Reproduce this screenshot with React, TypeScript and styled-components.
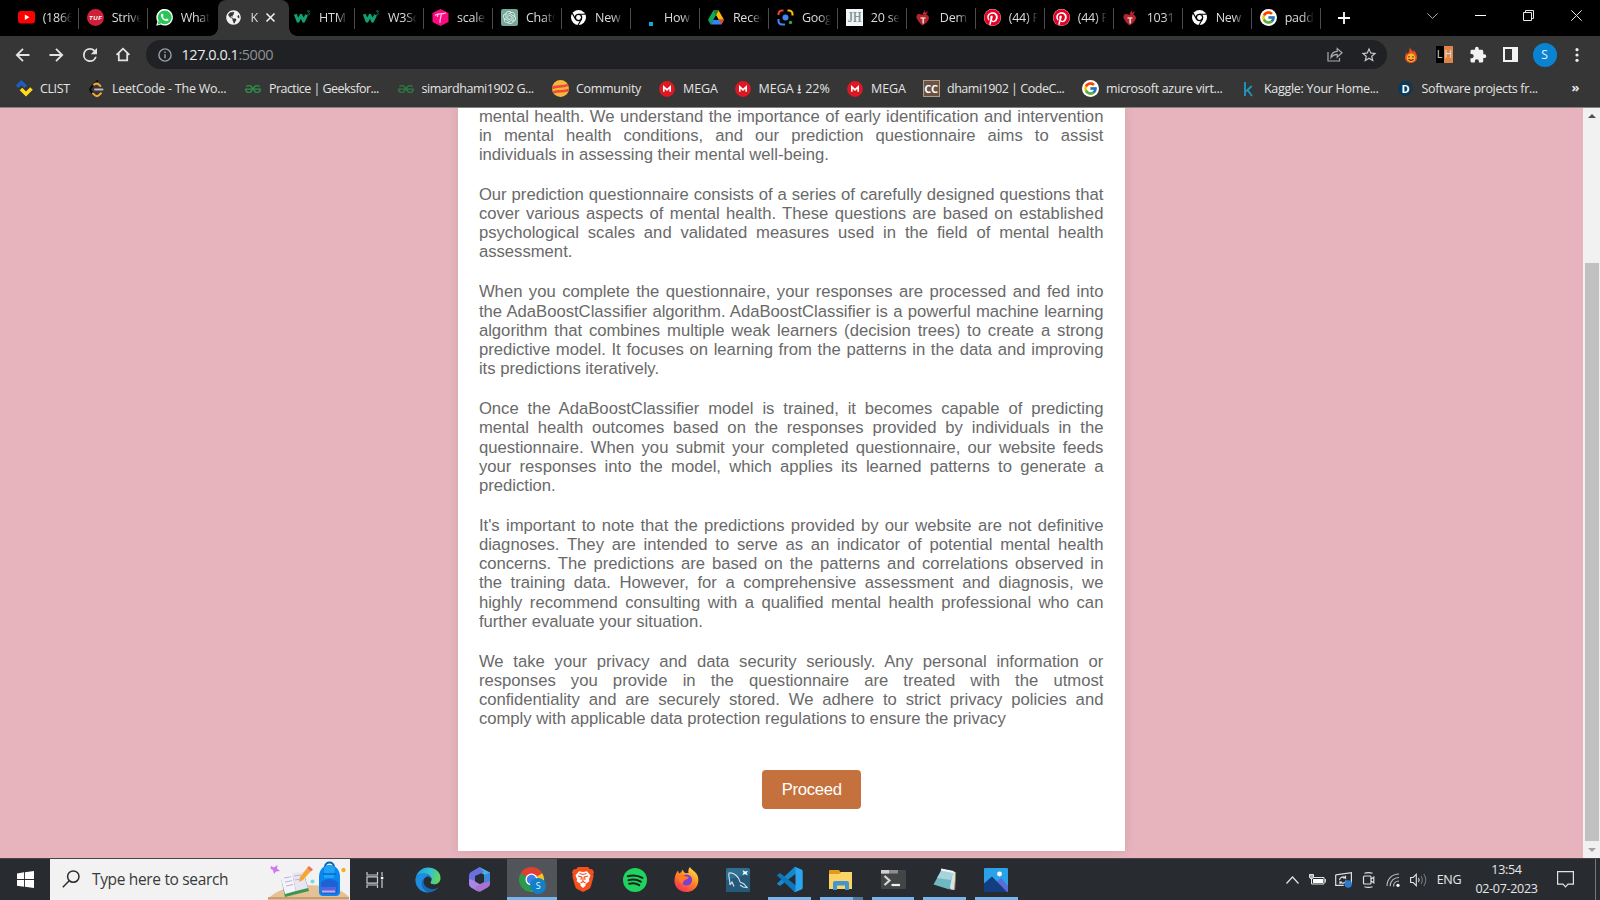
import React from "react";
import styled, { createGlobalStyle, css } from "styled-components";
import { FaPinterest, FaGlobeAmericas } from "react-icons/fa";
import { FcGoogle } from "react-icons/fc";
import { SiOpenai, SiGeeksforgeeks } from "react-icons/si";
import { MdExtension, MdStarBorder } from "react-icons/md";

const Global = createGlobalStyle`
  * { box-sizing: border-box; }
  html, body { margin: 0; padding: 0; width: 1600px; height: 900px; overflow: hidden; }
  svg { display: block; flex: none; overflow: visible; }
`;

const uiFont = css`
  font-family: "Open Sans", "Noto Sans", sans-serif;
`;

const Screen = styled.div`
  width: 1600px;
  height: 900px;
  display: flex;
  flex-direction: column;
  overflow: hidden;
  ${uiFont}
`;

/* ---------- tab strip ---------- */

const TabStrip = styled.div`
  flex: none;
  height: 36px;
  background: #000;
  display: flex;
  padding-left: 10px;
  color: #dcdcdc;
`;

const Tab = styled.div<{ $active?: boolean; $line?: boolean }>`
  position: relative;
  width: 68.98px;
  flex: none;
  height: 36px;
  display: flex;
  align-items: center;
  padding: 0 0 1px 7.7px;
  background: ${(p) => (p.$active ? "#363636" : "transparent")};
  border-radius: 8px 8px 0 0;
  ${(p) =>
    p.$line &&
    css`
      &::after {
        content: "";
        position: absolute;
        right: 0;
        top: 8px;
        width: 1px;
        height: 21px;
        background: #4b4b4b;
      }
    `}
  ${(p) =>
    p.$active &&
    css`
      width: 71px;
      margin-left: 0.9px;
      margin-right: -2.4px;
      &::before, &::after {
        content: "";
        position: absolute;
        bottom: 0;
        width: 8px;
        height: 8px;
      }
      &::before { left: -8px; background: radial-gradient(circle at 0 0, transparent 7.5px, #363636 8px); }
      &::after { right: -8px; background: radial-gradient(circle at 100% 0, transparent 7.5px, #363636 8px); }
    `}
`;

const Favicon = styled.span`
  width: 17px;
  height: 17px;
  flex: none;
  display: flex;
  align-items: center;
  justify-content: center;
`;

const TabTitle = styled.span<{ $w?: number }>`
  margin-left: 8px;
  width: ${(p) => p.$w ?? 29}px;
  overflow: hidden;
  white-space: nowrap;
  font-size: 12.5px;
  line-height: 18px;
  letter-spacing: -0.25px;
  mask-image: linear-gradient(90deg, #000 60%, transparent 100%);
`;

const NewTab = styled.div`
  width: 46px;
  display: flex;
  align-items: center;
  justify-content: center;
`;

const WindowControls = styled.div`
  margin-left: auto;
  display: flex;
  align-items: center;
  padding-bottom: 5px;
  gap: 37px;
  margin-right: 18px;
`;

/* ---------- address row ---------- */

const AddressRow = styled.div`
  flex: none;
  height: 37px;
  background: #363636;
  display: flex;
  align-items: center;
  padding-left: 16px;
`;

const NavButtons = styled.div`
  width: 130px;
  display: flex;
  align-items: center;
  gap: 19.3px;
`;

const Omnibox = styled.div`
  width: 1241px;
  height: 29px;
  border-radius: 15px;
  background: #202124;
  display: flex;
  align-items: center;
  padding: 0 9.5px 0 11.5px;
`;

const Url = styled.span`
  margin-left: 10px;
  font-size: 14.5px;
  line-height: 20px;
  letter-spacing: -0.47px;
  color: #e8eaed;
  flex: 1;
`;

const Port = styled.span`
  color: #8e9195;
`;

const OmniActions = styled.div`
  display: flex;
  align-items: center;
  gap: 17px;
`;

const Extensions = styled.div`
  flex: 1;
  display: flex;
  align-items: center;
  padding-left: 16px;
`;

const ExtSlot = styled.span<{ $w: number }>`
  width: ${(p) => p.$w}px;
  flex: none;
  display: flex;
  justify-content: center;
`;

const LhBadge = styled.span`
  width: 17px;
  height: 17px;
  flex: none;
  display: grid;
  grid-template-columns: 1fr 1fr;
  text-align: center;
  font: 10px/17px "Liberation Sans", sans-serif;
  color: #ddd;
  background: linear-gradient(90deg, #000 50%, #dd8449 50%);
`;

const Avatar = styled.span<{ $size: number; $font: number; $bg: string }>`
  width: ${(p) => p.$size}px;
  height: ${(p) => p.$size}px;
  flex: none;
  border-radius: 50%;
  background: ${(p) => p.$bg};
  color: #e9f4fb;
  font-size: ${(p) => p.$font}px;
  line-height: ${(p) => p.$size}px;
  text-align: center;
`;

/* ---------- bookmarks ---------- */

const BookmarkBar = styled.div`
  flex: none;
  height: 35px;
  background: #363636;
  border-bottom: 1px solid #828282;
  display: flex;
  align-items: center;
  padding: 0 0 3px 15.5px;
`;

const Bookmark = styled.div<{ $w: number }>`
  width: ${(p) => p.$w}px;
  flex: none;
  display: flex;
  align-items: center;
  gap: 7.5px;
  white-space: nowrap;
  color: #e4e4e4;
`;

const BookmarkLabel = styled.span<{ $ls?: number }>`
  font-size: 12.5px;
  line-height: 18px;
  letter-spacing: ${(p) => p.$ls ?? -0.3}px;
`;

const MoreMark = styled.span`
  font-size: 13px;
  line-height: 16px;
  font-weight: 700;
  color: #e4e4e4;
  padding: 0 0 3px 2px;
`;

const LetterBadge = styled.span<{ $bg: string; $fg: string; $round?: boolean; $size: number; $font: number; $border?: string }>`
  width: ${(p) => p.$size}px;
  height: ${(p) => p.$size}px;
  border-radius: ${(p) => (p.$round ? "50%" : "0")};
  background: ${(p) => p.$bg};
  border: ${(p) => (p.$border ? `1px solid ${p.$border}` : "none")};
  color: ${(p) => p.$fg};
  font-size: ${(p) => p.$font}px;
  font-weight: 700;
  letter-spacing: -0.3px;
  display: flex;
  align-items: center;
  justify-content: center;
  line-height: 1;
`;

/* ---------- page ---------- */

const Viewport = styled.div`
  flex: 1;
  min-height: 0;
  display: flex;
  overflow: hidden;
  background: #e7b4bd;
`;

const PageArea = styled.main`
  flex: 1;
  padding-left: 458px;
  padding-bottom: 7px;
  display: flex;
`;

const Card = styled.article`
  width: 667px;
  background: #fff;
  box-shadow: 0 0 10px rgba(0, 0, 0, 0.1);
  padding: 0 21.6px 0 20.9px;
  color: #696969;
  font-family: "Liberation Sans", Arial, sans-serif;
  font-size: 16.667px;
  line-height: 19.17px;
`;

const Copy = styled.p`
  margin: 0 0 20.83px;
  text-align: justify;
  &:first-child { margin-top: -1.4px; }
`;

const ButtonRow = styled.div`
  display: flex;
  justify-content: center;
  padding: 20.6px 0 0 41px;
`;

const ProceedButton = styled.button`
  width: 99px;
  height: 39px;
  padding: 1.5px 0 0 0;
  border: 0;
  border-radius: 4px;
  background: #c4713d;
  color: #fff;
  font: 16.667px "Liberation Sans", Arial, sans-serif;
  letter-spacing: -0.3px;
`;

const ScrollTrack = styled.div`
  width: 17px;
  background: #f1f1f1;
  display: flex;
  flex-direction: column;
  align-items: center;
`;

const ScrollArrow = styled.div`
  height: 17px;
  display: flex;
  align-items: center;
`;

const ScrollThumb = styled.div`
  width: 14px;
  height: 579px;
  margin-top: 138px;
  background: #c1c1c1;
`;

/* ---------- taskbar ---------- */

const Taskbar = styled.footer`
  flex: none;
  height: 42px;
  background: #282c31;
  border-top: 1px solid #4a4448;
  display: flex;
`;

const StartCell = styled.div`
  width: 50px;
  display: flex;
  align-items: center;
  justify-content: center;
`;

const SearchBox = styled.div`
  width: 300px;
  height: 40.5px;
  background: #f2f2f2;
  display: flex;
  align-items: center;
  padding-left: 12px;
`;

const SearchText = styled.span`
  margin-left: 12px;
  width: 177px;
  font-size: 15.5px;
  line-height: 22px;
  letter-spacing: -0.34px;
  color: #3a3a3a;
  white-space: nowrap;
`;

const TaskViewCell = styled.div`
  width: 52.5px;
  padding-right: 2px;
  display: flex;
  align-items: center;
  justify-content: center;
`;

const AppCell = styled.div<{ $active?: boolean; $open?: boolean; $stack?: boolean }>`
  width: 51.65px;
  position: relative;
  display: flex;
  align-items: center;
  justify-content: center;
  ${(p) => p.$active && css`background: linear-gradient(90deg, transparent 1px, #515458 1px);`}
  &::after {
    content: "";
    display: ${(p) => (p.$open || p.$active ? "block" : "none")};
    position: absolute;
    left: ${(p) => (p.$active ? 1 : 4.5)}px;
    right: ${(p) => (p.$active ? 0 : 4.5)}px;
    bottom: 0;
    height: 3px;
    background: ${(p) => (p.$stack ? "linear-gradient(90deg, #78b5ea 33px, #4f7ba1 33px)" : "#78b5ea")};
  }
`;

const AppMark = styled.span`
  position: relative;
  display: flex;
`;

const MarkBadge = styled.span`
  position: absolute;
  right: -2px;
  bottom: -2px;
  display: flex;
`;

const Tray = styled.div`
  margin-left: auto;
  display: flex;
  align-items: center;
  color: #e8e8e8;
`;

const TraySlot = styled.span<{ $w: number }>`
  width: ${(p) => p.$w}px;
  display: flex;
  justify-content: center;
`;

const Language = styled.span`
  width: 32px;
  font-size: 12.5px;
  letter-spacing: -0.3px;
  text-align: center;
`;

const Clock = styled.div`
  width: 83px;
  text-align: center;
  font-size: 12.5px;
  line-height: 19px;
  letter-spacing: -0.3px;
  padding-bottom: 1px;
`;

const ShowDesktop = styled.div`
  width: 5px;
  height: 41px;
  border-left: 1px solid #777;
`;

/* ---------- drawings ---------- */

const YouTube = () => (
  <svg width="17" height="13" viewBox="0 0 17 13"><rect width="17" height="12.5" rx="3" fill="#f00" /><path d="M6.8 3.6v5.4l4.6-2.7z" fill="#fff" /></svg>
);
const StriverLogo = () => (
  <svg width="17" height="17" viewBox="0 0 17 17">
    <circle cx="8.5" cy="8.5" r="8.5" fill="#d11f3a" />
    <text x="8.5" y="10.8" textAnchor="middle" fontFamily="Liberation Sans, sans-serif" fontSize="6" fontWeight="700" fontStyle="italic" fill="#fff" textLength="13">TUF</text>
  </svg>
);
const WhatsApp = () => (
  <svg width="17" height="17" viewBox="0 0 17 17">
    <path d="M.2 16.8 1.4 12.4A8.3 8.3 0 1 1 4.7 15.6z" fill="#fff" />
    <circle cx="8.7" cy="8.3" r="6.9" fill="#27c656" />
    <path d="M1.6 15.4 2.6 11.8 5 14.5z" fill="#27c656" />
    <path d="M6.1 4.6c-1 .4-1.5 1.500-1 2.800.8 2.200 2.600 4 4.900 4.700 1.300.4 2.500-.4 2.500-1.600 0-.4-1.600-1.200-2-1.100-.4.100-.7.900-1.100.9-.8-.1-2.200-1.500-2.500-2.200-.1-.4.600-.8.600-1.200 0-.5-.6-2.300-1.400-2.300z" fill="#fff" />
  </svg>
);
const W3 = () => (
  <svg width="17" height="15" viewBox="0 0 17 15">
    <path d="M1.300 4.200 4 11.200 7 5.400 9.600 11.200 12.600 4.800" fill="none" stroke="#11a06e" strokeWidth="3" strokeLinejoin="round" />
    <path d="M13 1h2.600l-1.200 1.600c1.500.1 1.500 2.400-.2 2.300-.6 0-1-.2-1.200-.7" fill="none" stroke="#0d7d56" strokeWidth=".9" />
  </svg>
);
const Scaler = () => (
  <svg width="17" height="17" viewBox="0 0 17 17">
    <path d="M8.500 0 16.500 4v9l-8 4-8-4V4z" fill="#fb0a7d" />
    <path d="M3.500 6.200c2-2.600 6-.3 10-2.200M9.300 4.700c-.2 4-1.600 5.500-1.300 8.500M6 5l-.6 2.500" fill="none" stroke="#ffc9e2" strokeWidth="1.200" strokeLinecap="round" />
  </svg>
);
const ChatBg = styled.span`
  width: 17px;
  height: 17px;
  border-radius: 2px;
  background: #74a89b;
  color: #e4f2ee;
  display: flex;
  align-items: center;
  justify-content: center;
`;
const ChromeMono = () => (
  <svg width="15" height="15" viewBox="0 0 24 24">
    <circle cx="12" cy="12" r="12" fill="#fff" />
    <circle cx="12" cy="12" r="6" fill="#000" />
    <circle cx="12" cy="12" r="3.900" fill="#fff" />
    <path d="M12 6.700H23M7.300 14.600 1.800 5M16.700 14.600 11.300 24" stroke="#000" strokeWidth="1.700" />
  </svg>
);
const Drive = () => (
  <svg width="16" height="15" viewBox="0 0 24 21">
    <path d="M8 0h8l8 14h-8z" fill="#ffba00" /><path d="M8 0 0 14l4 7L12 7z" fill="#0da960" />
    <path d="M4 21h16l4-7H8z" fill="#3b82f0" /><path d="M20 21l4-7h-8z" fill="#e94235" /><path d="M8 0h8l-4 7z" fill="#12803c" />
    <path d="M12 7.500 8.200 14h7.600z" fill="#000" />
  </svg>
);
const Lens = () => (
  <svg width="17" height="17" viewBox="0 0 17 17" fill="none" strokeWidth="2.100">
    <path d="M1.500 6V5A3.500 3.500 0 0 1 5 1.500h1.500" stroke="#ea4335" /><path d="M10.500 1.500H12A3.500 3.500 0 0 1 15.500 5v1.500" stroke="#fbbc04" />
    <path d="M1.500 10v2A3.500 3.500 0 0 0 5 15.500h3" stroke="#4285f4" /><circle cx="8.500" cy="8.500" r="3" fill="#4285f4" /><circle cx="13.500" cy="13.500" r="1.700" fill="#34a853" />
  </svg>
);
const JhLogo = () => (
  <svg width="17" height="17" viewBox="0 0 17 17"><rect width="17" height="17" fill="#f4f7f7" />
    <text x="8.500" y="13.300" textAnchor="middle" fontFamily="Liberation Serif, serif" fontSize="14" fontWeight="700" fill="#84949a" textLength="14" lengthAdjust="spacingAndGlyphs">JH</text></svg>
);
const RedFruit = () => (
  <svg width="14" height="16" viewBox="0 0 14 16">
    <path d="M5 4.500C2 3-.5 5.500.8 8.500 2 11.500 4.500 13.500 6.500 15.500 9 14 12 11.500 12.800 9 13.500 6 11 4 8.500 5z" fill="#b3242e" />
    <path d="M6.500 4.500 8.500 0l.5 3 3-2-2 4z" fill="#c22a36" />
    <path d="M4.500 8h5M7.200 8v5.500" stroke="#e8cccc" strokeWidth="1.700" />
  </svg>
);
const PinBg = styled.span`
  width: 17px;
  height: 17px;
  border-radius: 50%;
  background: #fff;
  color: #e60023;
  display: flex;
`;
const GoogleDisc = styled.span`
  width: 17px;
  height: 17px;
  border-radius: 50%;
  background: #fff;
  display: flex;
  align-items: center;
  justify-content: center;
`;
const HowDot = styled.span`
  width: 4px;
  height: 4px;
  background: #13a8e0;
  margin: 13px 0 0 8px;
`;
const Clist = () => (
  <svg width="17" height="17" viewBox="0 0 17 17" fill="none" strokeWidth="3.600">
    <path d="M1.200 6.800 5.300 2.500l4.500 4.300" stroke="#1d5fc0" /><path d="M5 9 10 14l5.500-5.500" stroke="#ffdc1a" />
  </svg>
);
const LeetMark = () => (
  <svg width="15" height="17" viewBox="0 0 15 17" fill="none" strokeWidth="2" strokeLinecap="round" strokeLinejoin="round">
    <path d="M8.500 1 2 7.600c-1.200 1.200-1.200 2.500 0 3.700l2 2.200" stroke="#0b0b0b" /><path d="M4 13.500 6 15.300c1.200 1 2.600 1 3.800 0L12 13.200M5 4.700c1.800-1.400 3.600-1.300 5 0l1.400 1.300" stroke="#f3a536" /><path d="M6 9.600h7.500" stroke="#b9b9b9" />
  </svg>
);
const Community = () => (
  <svg width="17" height="17" viewBox="0 0 17 17">
    <circle cx="8.500" cy="8.500" r="8.500" fill="#f9b63c" /><path d="M.3 6.500C4 4.500 9 6 15.500 3.700L16.600 6C10 8.500 5 7 .2 9.500zM.7 11.500C5 9 10 11 16.800 8.500l-.5 3C11 13 6 12 1.800 13.500z" fill="#ed4b3c" />
  </svg>
);
const Mega = () => (
  <svg width="16" height="16" viewBox="0 0 16 16"><circle cx="8" cy="8" r="7.900" fill="#df1722" /><path d="M4.800 10.800V5.800L8 8.800l3.200-3v5" fill="none" stroke="#fff" strokeWidth="1.600" /></svg>
);
const Kaggle = () => (
  <svg width="10" height="16" viewBox="0 0 10 16"><path d="M2 1v14M8.700 5 3 10.500M4.600 9 9 15" fill="none" stroke="#2095bd" strokeWidth="1.900" /></svg>
);
const Flame = () => (
  <svg width="12" height="16" viewBox="0 0 12 16">
    <path d="M4.500 0C5 2 7 2.500 8 5c.3-.6.6-1.200.7-2C11 5.500 12 8 12 10.500c0 3-2.500 5.500-6 5.500s-6-2.500-6-5.500C0 8.500 1 7 1.500 5.500c.7.500 1 1 1.200 1.700C4 5 5 3 4.500 0z" fill="#ec4e1f" />
    <circle cx="6" cy="10.800" r="4.300" fill="#ffb32b" /><path d="M4 9v1.500M8 9v1.500M3.500 12c1.500 1.800 3.600 1.800 5 0" stroke="#4a2410" strokeWidth="1.100" fill="none" />
  </svg>
);
const Arrow = ({ flip }: { flip?: boolean }) => (
  <svg width="14" height="14" viewBox="0 0 14 14"><path d={flip ? "M.5 7h12.500M7 .8 13.200 7 7 13.200" : "M13.500 7H1M7 .8.8 7 7 13.200"} fill="none" stroke="#e3e3e3" strokeWidth="1.800" /></svg>
);
const HomeMark = () => (
  <svg width="14" height="15" viewBox="0 0 15 15"><path d="M.6 7.800 7.500 1.300l6.900 6.500M3 6v7.800h9V6" fill="none" stroke="#e3e3e3" strokeWidth="1.900" /></svg>
);
const InfoMark = () => (
  <svg width="14" height="14" viewBox="0 0 14 14"><circle cx="7" cy="7" r="6.100" fill="none" stroke="#9aa0a6" strokeWidth="1.400" /><path d="M7 6.200v4.100M7 3.600v1.500" stroke="#9aa0a6" strokeWidth="1.500" /></svg>
);
const ShareMark = () => (
  <svg width="16" height="15" viewBox="0 0 16 15" fill="none" stroke="#a9acb0" strokeWidth="1.200"><path d="M1 5v9h11.500v-3" /><path d="M4 10.500C4.300 6.500 7 4.500 10.200 4.400V1.500l4.800 4.300-4.800 4.300V7.300C7.500 7.300 5.600 8.300 4 10.500z" /></svg>
);

const Windows = () => (
  <svg width="17" height="17" viewBox="0 0 17 17" fill="#fff"><path d="M0 2.400 7 1.300v6.800H0zM7.900 1.200 17 0v8.100H7.900zM0 8.900h7v6.800l-7-1zM7.900 8.900H17V17l-9.100-1.200z" /></svg>
);
const SearchGlass = () => (
  <svg width="18" height="18" viewBox="0 0 18 18" fill="none" stroke="#2c2c2c" strokeWidth="1.500"><circle cx="11.300" cy="6.600" r="5.700" /><path d="M7.200 10.800.8 17.200" /></svg>
);
const SchoolArt = () => (
  <svg width="82" height="41" viewBox="0 0 82 41">
    <path d="M0 40.500C10 24 66 20 81 38v2.500z" fill="#e6c096" /><path d="M0 40.500v-2.500h81v2.500z" fill="#c99e70" />
    <path d="m3 7 3 1.500L9.500 6 9 9.500l3 2.500-4 .5L6 15l-1-4-2.500-1.200z" fill="#cf76f2" />
    <path d="M13 19 36 15l5 17-24 6z" fill="#3c9650" /><path d="M12 16 24 14l4 18-11 3z" fill="#f5f3fa" /><path d="m24 14 11-1 5 16-12 3z" fill="#e9e5f4" />
    <path d="m16 19 7-1.200M17 23l7-1.300M18 27l7-1.500M26 17l7-1M27 21l7-1.300" stroke="#bbb4cf" strokeWidth="1" />
    <path d="m31 23 1-5 7-9 4 3-8 9z" fill="#f5a637" /><path d="m39 9 2-2 4 3.500-2 2z" fill="#ef6f62" />
    <circle cx="44.500" cy="22.500" r="2" fill="#75d6e6" /><circle cx="75.500" cy="11" r="2.200" fill="#f5b026" />
    <path d="M57 8c0-6 9-6 9 0" fill="none" stroke="#145ea7" strokeWidth="2" />
    <path d="M51 18c0-16 21-16 21 0v15q0 4-4 4H55q-4 0-4-4z" fill="#0b86ee" /><path d="M56 9c3-4 8-4 11 0l-1 10H56z" fill="#1fa3fb" />
    <path d="M53 24c2-5 15-5 17 0v8q0 3-3 3H56q-3 0-3-3z" fill="#1d62d4" /><path d="M53 28h15v6H56q-3 0-3-3z" fill="#5366d9" /><path d="M54 32.500h13" stroke="#c3a7f3" strokeWidth="2" />
    <path d="M55 15h13" stroke="#0661b7" strokeWidth="1.300" />
  </svg>
);
const TaskView = () => (
  <svg width="18" height="16" viewBox="0 0 18 16" fill="none" stroke="#c9cbcd" strokeWidth="1.200"><path d="M1 0v3h10.500V0M1 16v-3h10.500v3M1 4.800h10.500v6.400H1zM16 0v4M16 8v8" /><path d="M14.800 4.800h2.500v2.500h-2.500z" fill="#fff" stroke="none" /></svg>
);
const Edge = () => (
  <svg width="26" height="26" viewBox="0 0 26 26">
    <defs><linearGradient id="eg" x1="0" x2="1" y1=".3" y2=".5"><stop offset="0" stopColor="#1ba0e4" /><stop offset=".55" stopColor="#35c1d0" /><stop offset="1" stopColor="#62d957" /></linearGradient></defs>
    <path d="M.6 11.500C2 4.500 7 .5 13 .5c7 0 12.500 4.500 12.500 10.500 0 4-3 6.300-6.300 6.300-2.500 0-4.500-1-3.200-2.800C18 11 15 8.500 11.500 8.500 6 8.500 1.500 11 .6 11.500z" fill="url(#eg)" />
    <path d="M.5 13C.5 9.500 4 6.500 9 6.600c4.500.1 7.500 2.900 7.500 5.900-1-2-3-3-5-2.500-4 1.500-4.500 9 2.500 11.500 4 1.300 7.500.5 9.800-1.700C21.500 23.500 17.500 25.500 13 25.500 6 25.500.5 20 .5 13z" fill="#1769b8" />
    <path d="M8 12.500c-3 4-1 10 5 13C6 25.500.5 20 .5 13c0-3 3-6 7.500-6.300 3-.1 5 .8 6 2-2 0-4.500 1.300-6 3.800z" fill="#1e8de0" />
  </svg>
);
const M365 = () => (
  <svg width="23" height="25" viewBox="0 0 23 25">
    <path d="M11.500 0 22 5.500V12l-6-2.500V7.500L11 5z" fill="#3fb5ea" /><path d="M11.500 0 3 5Q1 6 1 8.500V18l6-3V9l9-4z" fill="#6c6fe0" />
    <path d="M1 12v5q0 2.500 2 3.500l6 3.500 4-7-6-3z" fill="#a987e8" /><path d="M22 9v8q0 2-2 3.300L12.500 24.500Q10 25.500 8 23l-1-3 9-5V9.500z" fill="#a873cf" /><path d="M22 5.500V14l-6 2V8z" fill="#3f86dd" />
    <path d="M11.500 7.800 15.600 10v4.800l-4.100 2.300-4.100-2.300V10z" fill="#282c31" />
  </svg>
);
const Chrome = () => (
  <svg width="25" height="25" viewBox="0 0 24 24">
    <path d="M12 12 1.600 6a12 12 0 0 1 20.800 0z" fill="#e0402f" /><path d="M12 12 22.400 6A12 12 0 0 1 12 24l-1-3z" fill="#f9c623" /><path d="M12 12 12 24A12 12 0 0 1 1.600 6z" fill="#2c9b49" /><path d="M1.600 6H12v6z" fill="#e0402f" />
    <circle cx="12" cy="12" r="5.800" fill="#fff" /><circle cx="12" cy="12" r="4.500" fill="#3d80ec" />
  </svg>
);
const BraveMark = () => (
  <svg width="22" height="25" viewBox="0 0 22 25">
    <path d="M6 0h10l2 2.300 2-.2L22 5l-.8 2.500.4 2-2.600 9.500q-.5 1.800-2 3L11 25l-6-3q-1.500-1.200-2-3L.4 9.500l.4-2L0 5l2-2.900 2 .2z" fill="#f4501e" />
    <path d="m7 4.200 4 .7 4-.7 3.500 4.300-1.500 3.500.3 2.300-3.800 2.700.2 1.500L11 21l-2.700-2.500.2-1.500-3.800-2.700.3-2.300-1.500-3.500z" fill="#fff" />
    <path d="m6 9 3.500 1-.6 3M16 9l-3.500 1 .6 3M8.500 16l2.500-1.500 2.500 1.500M11 10v4M7.500 6.500 11 7.500l3.500-1" fill="none" stroke="#f4501e" strokeWidth="1.100" />
  </svg>
);
const Spotify = () => (
  <svg width="24" height="24" viewBox="0 0 24 24"><circle cx="12" cy="12" r="12" fill="#1ed35f" /><path d="M4.800 8.300c5-1.400 10.200-.9 14.600 1.600M5.500 12.200c4.200-1.200 8.600-.7 12.300 1.500M6.200 15.800c3.500-.9 7-.6 10 1.300" fill="none" stroke="#17251b" strokeWidth="2" strokeLinecap="round" /></svg>
);
const Firefox = () => (
  <svg width="25" height="25" viewBox="0 0 25 25">
    <defs><linearGradient id="ff" x1=".8" x2=".2" y1="0" y2="1"><stop offset="0" stopColor="#ffe14a" /><stop offset=".45" stopColor="#ff8a1f" /><stop offset="1" stopColor="#f6285f" /></linearGradient></defs>
    <path d="M16 0c1 2.500 5 4 7 7.500 4 8-1 17.500-10.500 17.500C5 25 0 19.500.5 13 .7 9 2 6 4 3.500L5 6.500 7.500 5l.5-2.500L11 6h3.500C14 4 14.500 1.500 16 0z" fill="url(#ff)" />
    <circle cx="12.500" cy="13" r="5.600" fill="#7b3fd4" /><path d="M4.500 8c3-1 5 0 7 1.500 2.500 0 3.500.5 3 1.500-1 1.500-3 1-4 2.500-1.500.5-2 2-1 3.500C5 15.500 3.500 12 4.500 8z" fill="#ff7b25" />
  </svg>
);
const MySql = () => (
  <svg width="24" height="24" viewBox="0 0 24 24"><rect width="24" height="24" rx="1.500" fill="#2e6e8f" /><path d="M0 12 24 6v18H0z" fill="#25597a" /><path d="M4 17c0-6-2-9-1-12 5-1 10 4 11 9l4 2 3 3.500-4-.5-3-2M4 17l2-3 2 4.500" fill="none" stroke="#d5e3ec" strokeWidth="1.100" /><path d="m16.500 2 2.500 1.500L22 3l-1.500 2L22 7.500 19 6l-2.500 1 1-2.500z" fill="#fff" /></svg>
);
const VsCode = () => (
  <svg width="26" height="25" viewBox="0 0 26 25"><path d="M19 6.500 3 19 .5 17.300 0 16.500 17 .5 19 0z" fill="#1587cf" /><path d="M19 18.500 3 6 .5 7.700 0 8.500 17 24.500l2 .5z" fill="#1177bd" /><path d="m18.500 0 6 2.500q1.200.6 1.200 2v16q0 1.400-1.200 2l-6 2.500q-1 .3-1.700-.5 1.700.5 1.700-1.500V2Q18.500 0 16.800.5q.7-.8 1.700-.5z" fill="#2ba5ee" /></svg>
);
const Explorer = () => (
  <svg width="24" height="20" viewBox="0 0 24 20"><path d="M0 1q0-1 1-1h9l1.500 2.500H23V5H0z" fill="#e19a1c" /><path d="M0 4h10l2-2h11v17H0z" fill="#fcd365" /><path d="M4 20v-7q0-2 2-2h12q2 0 2 2v7h-4v-4.500H8V20z" fill="#4295cf" /></svg>
);
const Terminal = () => (
  <svg width="25" height="19" viewBox="0 0 25 19"><rect width="25" height="19" rx="1" fill="#444547" /><path d="M0 0h17v3.500H0z" fill="#8d8e90" /><path d="M0 0h8v3.500H0z" fill="#cfcfcf" /><path d="m3.500 6 5 4.500-5 4.500" fill="none" stroke="#d7d7d7" strokeWidth="2.200" /><path d="M10.500 15H19" stroke="#f0f0f0" strokeWidth="2.200" /></svg>
);
const Notepad = () => (
  <svg width="24" height="23" viewBox="0 0 24 23"><path d="m9 1 13.500 3-1 18-4-.5z" fill="#d4e3e4" /><path d="m22.500 4 .6 1-1 16.500-.7.500z" fill="#b98c3c" /><path d="M8.500 2 20 4l-3.500 17.500L.5 16.500z" fill="#6fb8c2" /><path d="M8.500 2 20 4l-2 8L4 10z" fill="#a6d4da" /><path d="M8 1.500 20.500 4" stroke="#eef6f6" strokeWidth="2" /></svg>
);
const Photos = () => (
  <svg width="24" height="24" viewBox="0 0 24 24"><rect width="24" height="24" rx="1" fill="#2aa2ea" /><path d="M11 15 17 10l7 8v6H11z" fill="#5b6bd8" /><path d="M0 15.500 8 8.500 23 24H0z" fill="#133e80" /><circle cx="15.500" cy="6" r="2.400" fill="#fff" /></svg>
);

const TrayBattery = () => (
  <svg width="17" height="12" viewBox="0 0 17 12" fill="none" stroke="#e5e5e5"><path d="M2.500 3.500h12.500v6.500H2.500z" /><path d="M4 5h10v4H4z" fill="#fff" stroke="none" /><path d="M16.300 5v3.500" strokeWidth="1.200" /><path d="M.5.500h4v3q0 1-2 1t-2-1zM2.500 4.500V9" fill="#aaa" /></svg>
);
const TraySync = () => (
  <svg width="17" height="16" viewBox="0 0 17 16" fill="none" stroke="#dfdfdf" strokeWidth="1.200"><path d="M.7 2.800 16.400.7V12M.7 2.800v10.500h8" /><path d="M4.500 8c.5-3 4-4 6-2V3.800M10.500 6H8M11 8.500c-.5 3-4.500 3.500-6 1.500v2M5 10h2" /><circle cx="13.200" cy="12" r="3.700" fill="#2b7ccd" stroke="none" /></svg>
);
const TrayMeet = () => (
  <svg width="13" height="16" viewBox="0 0 13 16" fill="none" stroke="#dfdfdf" strokeWidth="1.200"><rect x="1.500" y="4" width="7.500" height="8" rx="1" /><path d="m9 7 2.800-1.800v5.600L9 9M2.500 1.300q4-1.500 8 0M2.500 14.700q4 1.500 8 0" /></svg>
);
const TrayWifi = () => (
  <svg width="14" height="14" viewBox="0 0 14 14" fill="none" stroke="#bcbcbc" strokeWidth="1.200"><path d="M1 13C1 6 6 1 13 1M4.200 13.300C4.200 8 8 4.500 13 4.500M7.500 13.500c0-3.300 2.500-5.500 5.500-5.500" /><circle cx="12" cy="12.300" r="1.600" fill="#fff" stroke="none" /></svg>
);
const TrayVolume = () => (
  <svg width="17" height="14" viewBox="0 0 17 14" fill="none" stroke="#e3e3e3" strokeWidth="1.100"><path d="M.6 4.500h2.600L6.300 1.300v11.400L3.200 9.500H.6z" /><path d="M8.500 5q1.300 2 0 4" /><path d="M11 3q2.600 4 0 8M13.800 1q4 6 0 12" stroke="#74777a" /></svg>
);

/* ---------- data ---------- */

type TabInfo = { title: string; icon: React.ReactNode; active?: boolean; line?: boolean };

const googleIcon = <GoogleDisc><FcGoogle size={15} /></GoogleDisc>;
const pinIcon = <PinBg><FaPinterest size={17} /></PinBg>;

const tabs: TabInfo[] = [
  { title: "(1866", icon: <YouTube />, line: true },
  { title: "Strive", icon: <StriverLogo />, line: true },
  { title: "What", icon: <WhatsApp /> },
  { title: "K", icon: <FaGlobeAmericas size={15} color="#f2f2f2" />, active: true },
  { title: "HTM", icon: <W3 />, line: true },
  { title: "W3Sc", icon: <W3 />, line: true },
  { title: "scale", icon: <Scaler />, line: true },
  { title: "ChatG", icon: <ChatBg><SiOpenai size={13} /></ChatBg>, line: true },
  { title: "New", icon: <ChromeMono />, line: true },
  { title: "How", icon: <HowDot />, line: true },
  { title: "Recen", icon: <Drive />, line: true },
  { title: "Goog", icon: <Lens />, line: true },
  { title: "20 se", icon: <JhLogo />, line: true },
  { title: "Dem", icon: <RedFruit />, line: true },
  { title: "(44) P", icon: pinIcon, line: true },
  { title: "(44) P", icon: pinIcon, line: true },
  { title: "1031", icon: <RedFruit />, line: true },
  { title: "New", icon: <ChromeMono />, line: true },
  { title: "padd", icon: googleIcon, line: true },
];

const bookmarks = [
  { w: 72, label: "CLIST", ls: -0.4, icon: <Clist /> },
  { w: 157, label: "LeetCode - The Wo...", ls: -0.25, icon: <LeetMark /> },
  { w: 152.5, label: "Practice | Geeksfor...", ls: -0.55, icon: <SiGeeksforgeeks size={16} color="#2f8d46" /> },
  { w: 154.5, label: "simardhami1902 G...", ls: -0.44, icon: <SiGeeksforgeeks size={16} color="#2c7a40" /> },
  { w: 107, label: "Community", icon: <Community /> },
  { w: 75.5, label: "MEGA", ls: -0.1, icon: <Mega /> },
  { w: 112.5, label: "MEGA ⭳ 22%", ls: 0, icon: <Mega /> },
  { w: 76, label: "MEGA", ls: -0.1, icon: <Mega /> },
  { w: 159, label: "dhami1902 | CodeC...", ls: -0.47, icon: <LetterBadge $bg="#6b5344" $fg="#fff" $size={17} $font={11} $border="#b09a88">CC</LetterBadge> },
  { w: 158, label: "microsoft azure virt...", icon: googleIcon },
  { w: 157.5, label: "Kaggle: Your Home...", icon: <Kaggle /> },
  { w: 172.5, label: "Software projects fr...", ls: -0.35, icon: <LetterBadge $bg="#0d3a58" $fg="#fff" $size={15} $font={11} $round>D</LetterBadge> },
];

const paragraphs = [
  "mental health. We understand the importance of early identification and intervention in mental health conditions, and our prediction questionnaire aims to assist individuals in assessing their mental well-being.",
  "Our prediction questionnaire consists of a series of carefully designed questions that cover various aspects of mental health. These questions are based on established psychological scales and validated measures used in the field of mental health assessment.",
  "When you complete the questionnaire, your responses are processed and fed into the AdaBoostClassifier algorithm. AdaBoostClassifier is a powerful machine learning algorithm that combines multiple weak learners (decision trees) to create a strong predictive model. It focuses on learning from the patterns in the data and improving its predictions iteratively.",
  "Once the AdaBoostClassifier model is trained, it becomes capable of predicting mental health outcomes based on the responses provided by individuals in the questionnaire. When you submit your completed questionnaire, our website feeds your responses into the model, which applies its learned patterns to generate a prediction.",
  "It's important to note that the predictions provided by our website are not definitive diagnoses. They are intended to serve as an indicator of potential mental health concerns. The predictions are based on the patterns and correlations observed in the training data. However, for a comprehensive assessment and diagnosis, we highly recommend consulting with a qualified mental health professional who can further evaluate your situation.",
  "We take your privacy and data security seriously. Any personal information or responses you provide in the questionnaire are treated with the utmost confidentiality and are securely stored. We adhere to strict privacy policies and comply with applicable data protection regulations to ensure the privacy",
];

const apps = [
  { icon: <Edge /> },
  { icon: <M365 /> },
  { icon: <AppMark><Chrome /><MarkBadge><Avatar $size={16} $font={9} $bg="#1180c4">S</Avatar></MarkBadge></AppMark>, active: true },
  { icon: <BraveMark /> },
  { icon: <Spotify /> },
  { icon: <Firefox /> },
  { icon: <MySql /> },
  { icon: <VsCode />, open: true },
  { icon: <Explorer />, open: true, stack: true },
  { icon: <Terminal />, open: true },
  { icon: <Notepad />, open: true },
  { icon: <Photos />, open: true },
];

export default function App() {
  return (
    <Screen>
      <Global />
      <TabStrip>
        {tabs.map((t, i) => (
          <Tab key={i} $active={t.active} $line={t.line}>
            <Favicon>{t.icon}</Favicon>
            <TabTitle $w={t.active ? 16 : undefined}>{t.title}</TabTitle>
            {t.active && <svg width="9" height="9" viewBox="0 0 9 9"><path d="m.5.5 8 8M8.500.5l-8 8" stroke="#f0f0f0" strokeWidth="1.600" /></svg>}
          </Tab>
        ))}
        <NewTab><svg width="12" height="12" viewBox="0 0 12 12"><path d="M6 0v12M0 6h12" stroke="#fff" strokeWidth="1.800" /></svg></NewTab>
        <WindowControls>
          <svg width="11" height="6" viewBox="0 0 11 6"><path d="m.4.4 5.100 5 5.100-5" fill="none" stroke="#aaa" /></svg>
          <svg width="11" height="2" viewBox="0 0 11 2"><path d="M0 .5h11" stroke="#fff" /></svg>
          <svg width="11" height="11" viewBox="0 0 11 11"><path d="M.5 2.500h8v8h-8zM2.500 2.500v-2h8v8h-2" fill="none" stroke="#e6e6e6" /></svg>
          <svg width="11" height="11" viewBox="0 0 11 11"><path d="m.3.3 10.400 10.400M10.700.3.3 10.700" stroke="#e6e6e6" /></svg>
        </WindowControls>
      </TabStrip>

      <AddressRow>
        <NavButtons>
          <Arrow />
          <Arrow flip />
          <svg width="14" height="14" viewBox="4 4 16 16" fill="#e3e3e3"><path d="M17.650 6.350A7.960 7.960 0 0 0 12 4a8 8 0 1 0 7.730 10h-2.080A6 6 0 1 1 12 6c1.660 0 3.140.690 4.220 1.780L13 11h7V4z" /></svg>
          <HomeMark />
        </NavButtons>
        <Omnibox>
          <InfoMark />
          <Url>127.0.0.1<Port>:5000</Port></Url>
          <OmniActions><ShareMark /><MdStarBorder size={18} color="#c6c9cc" /></OmniActions>
        </Omnibox>
        <Extensions>
          <ExtSlot $w={16}><Flame /></ExtSlot>
          <ExtSlot $w={50}><LhBadge><span>L</span><span>H</span></LhBadge></ExtSlot>
          <ExtSlot $w={17}><MdExtension size={18} color="#f2f2f2" /></ExtSlot>
          <ExtSlot $w={49}><svg width="15" height="15" viewBox="0 0 15 15"><path fill="#f2f2f2" fillRule="evenodd" d="M0 0h15v15H0zM2 2v11h7V2z" /></svg></ExtSlot>
          <ExtSlot $w={19}><Avatar $size={24} $font={12} $bg="#0a84d0">S</Avatar></ExtSlot>
          <ExtSlot $w={46}><svg width="4" height="14" viewBox="0 0 4 14" fill="#eee"><circle cx="2" cy="1.700" r="1.600" /><circle cx="2" cy="7" r="1.600" /><circle cx="2" cy="12.300" r="1.600" /></svg></ExtSlot>
        </Extensions>
      </AddressRow>

      <BookmarkBar>
        {bookmarks.map((b, i) => (
          <Bookmark key={i} $w={b.w}>
            <Favicon>{b.icon}</Favicon>
            <BookmarkLabel $ls={b.ls}>{b.label}</BookmarkLabel>
          </Bookmark>
        ))}
        <MoreMark>»</MoreMark>
      </BookmarkBar>

      <Viewport>
        <PageArea>
          <Card>
            {paragraphs.map((p, i) => <Copy key={i}>{p}</Copy>)}
            <ButtonRow><ProceedButton>Proceed</ProceedButton></ButtonRow>
          </Card>
        </PageArea>
        <ScrollTrack>
          <ScrollArrow><svg width="8" height="4" viewBox="0 0 8 4"><path d="M0 4 4 0l4 4z" fill="#505050" /></svg></ScrollArrow>
          <ScrollThumb />
          <ScrollArrow><svg width="8" height="4" viewBox="0 0 8 4"><path d="m0 0 4 4 4-4z" fill="#a3a3a3" /></svg></ScrollArrow>
        </ScrollTrack>
      </Viewport>

      <Taskbar>
        <StartCell><Windows /></StartCell>
        <SearchBox><SearchGlass /><SearchText>Type here to search</SearchText><SchoolArt /></SearchBox>
        <TaskViewCell><TaskView /></TaskViewCell>
        {apps.map((a, i) => (
          <AppCell key={i} $active={a.active} $open={a.open} $stack={a.stack}>{a.icon}</AppCell>
        ))}
        <Tray>
          <TraySlot $w={19}><svg width="13" height="8" viewBox="0 0 13 8"><path d="M.5 7.500 6.500 1l6 6.500" fill="none" stroke="#e3e3e3" strokeWidth="1.200" /></svg></TraySlot>
          <TraySlot $w={31}><TrayBattery /></TraySlot>
          <TraySlot $w={20}><TraySync /></TraySlot>
          <TraySlot $w={30}><TrayMeet /></TraySlot>
          <TraySlot $w={20}><TrayWifi /></TraySlot>
          <TraySlot $w={30}><TrayVolume /></TraySlot>
          <Language>ENG</Language>
          <Clock><div>13:54</div><div>02-07-2023</div></Clock>
          <TraySlot $w={34}><svg width="17" height="17" viewBox="0 0 17 17"><path d="M.6.600h15.800v12.500H11l-2.500 2.700L6 13.100H.600z" fill="none" stroke="#e3e3e3" strokeWidth="1.200" /></svg></TraySlot>
          <TraySlot $w={13} />
          <ShowDesktop />
        </Tray>
      </Taskbar>
    </Screen>
  );
}
